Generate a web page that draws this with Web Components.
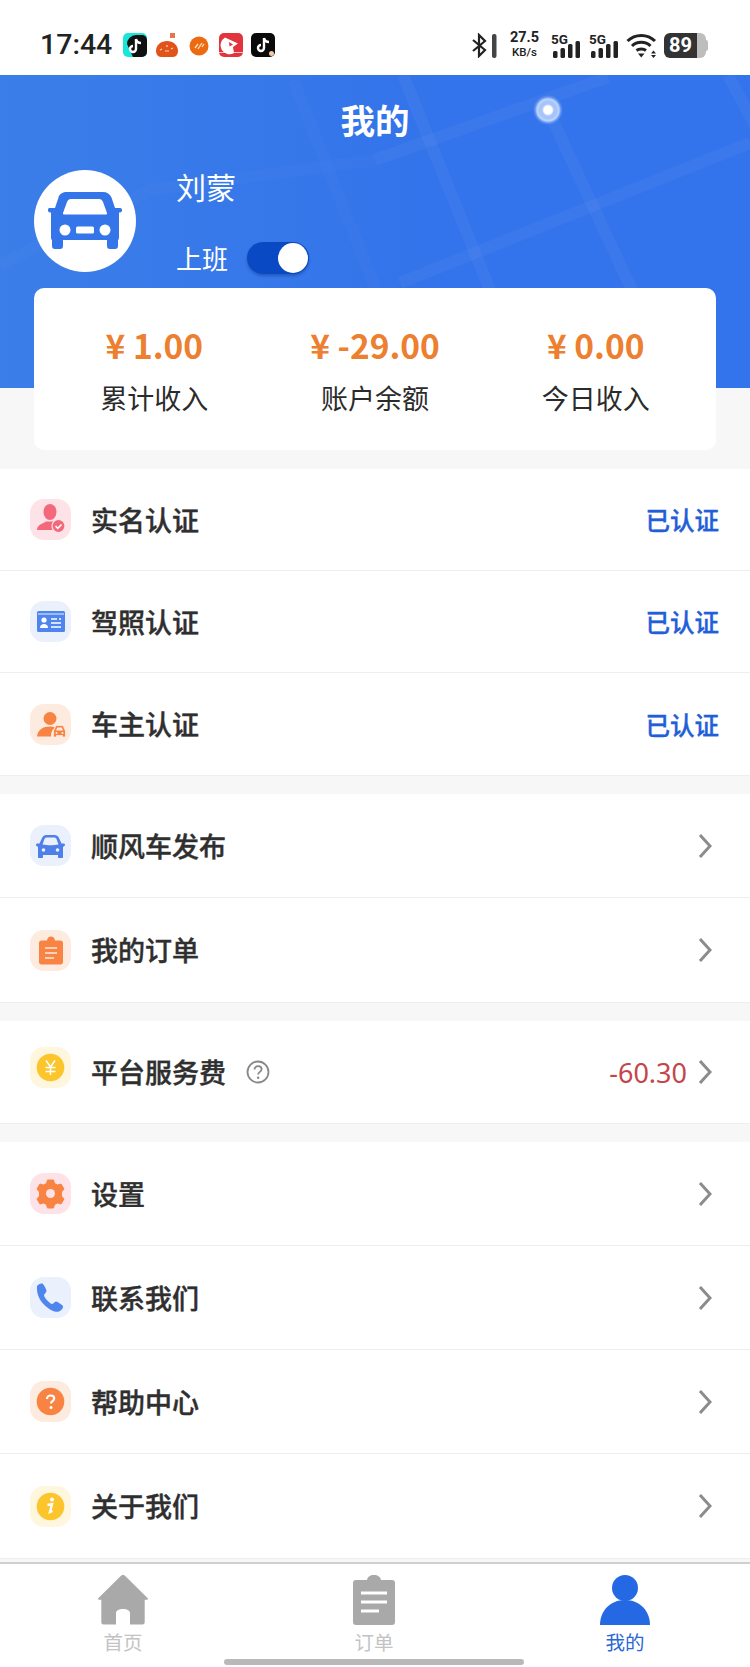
<!DOCTYPE html>
<html lang="zh">
<head>
<meta charset="utf-8">
<title>我的</title>
<style>
  html, body { margin: 0; height: 1667px; overflow: hidden; background: #f7f7f7; }
  body { font-family: "Noto Sans CJK SC", "Noto Sans", sans-serif; }
  profile-page { width: 750px; height: 1667px; }
</style>
</head>
<body>

<profile-page>
  <status-bar></status-bar>
  <profile-header name="刘蒙" state="上班"></profile-header>
  <stats-card>
    <stat-item value="¥ 1.00" label="累计收入"></stat-item>
    <stat-item value="¥ -29.00" label="账户余额"></stat-item>
    <stat-item value="¥ 0.00" label="今日收入"></stat-item>
  </stats-card>

  <menu-group size="102">
    <menu-row label="实名认证" icon="realname"><span class="done">已认证</span></menu-row>
    <menu-row label="驾照认证" icon="license"><span class="done">已认证</span></menu-row>
    <menu-row label="车主认证" icon="owner"><span class="done">已认证</span></menu-row>
  </menu-group>

  <menu-group size="104">
    <menu-row label="顺风车发布" icon="car" arrow></menu-row>
    <menu-row label="我的订单" icon="order" arrow></menu-row>
  </menu-group>

  <menu-group size="102">
    <menu-row label="平台服务费" icon="fee" hint arrow lift><span class="fee">-60.30</span></menu-row>
  </menu-group>

  <menu-group size="104" last>
    <menu-row label="设置" icon="settings" arrow></menu-row>
    <menu-row label="联系我们" icon="phone" arrow></menu-row>
    <menu-row label="帮助中心" icon="help" arrow></menu-row>
    <menu-row label="关于我们" icon="about" arrow></menu-row>
  </menu-group>

  <tab-bar>
    <tab-item label="首页" icon="home"></tab-item>
    <tab-item label="订单" icon="orders"></tab-item>
    <tab-item label="我的" icon="me" active></tab-item>
  </tab-bar>
</profile-page>

<script>
  function mount(el, html) {
    const template = document.createElement("template");
    template.innerHTML = html;
    el.attachShadow({ mode: "open" }).appendChild(template.content.cloneNode(true));
  }

  // icons drawn on a 41x41 tile
  const TILES = {
    realname: ["#fde3e7", `<ellipse cx="20" cy="13" rx="6.500" ry="8" fill="#f4687c"/><path d="M7 31c0-5 5-6 9-8.500h8c2 1 3 2 4 3l-2 5.500z" fill="#f4687c"/><circle cx="28.500" cy="27" r="6.500" fill="#f4687c" stroke="#fde3e7" stroke-width="1.200"/><path d="M25.500 27l2.300 2.300 3.700-3.800" fill="none" stroke="#fff" stroke-width="1.600"/>`],
    license: ["#ebf0fd", `<rect x="7" y="10" width="28" height="21" rx="1.500" fill="#4f86ee"/><path d="M8 13h26" stroke="#ebf0fd" stroke-width="1"/><circle cx="14" cy="19" r="2.600" fill="#fff"/><path d="M10 27c0-3 2-4 4-4s4 1 4 4z" fill="#fff"/><path d="M21 18h6m-6 4h10m-10 4h10M29 18h2" stroke="#fff" stroke-width="1.500"/>`],
    owner: ["#fdebdf", `<circle cx="20" cy="14.500" r="6.500" fill="#f98342"/><path d="M7 32.500c1-7 6-10 13-10 2 0 3 0 5 1-3 2-4 5-4 9z" fill="#f98342"/><path d="M23.500 33v-6l2-4.500c.3-.7.8-1 1.500-1h5c.7 0 1.200.3 1.500 1l2 4.500v6h-3v-1.500h-6V33z" fill="#f98342" stroke="#fdebdf" stroke-width=".8"/><path d="M26 26.500l1.300-3h4.400l1.300 3z" fill="#fdebdf"/><circle cx="26.500" cy="29" r="1" fill="#fdebdf"/><circle cx="32.500" cy="29" r="1" fill="#fdebdf"/>`],
    car: ["#ebf0fd", `<path d="M7 18.500h2.500l2.500-5.500c.8-2 2.500-3 4.500-3h8c2 0 3.700 1 4.500 3l2.500 5.500H34c.8 0 1 1 1 2l-2 1.500V32c0 .6-.4 1-1 1h-3c-.6 0-1-.4-1-1v-2H13v2c0 .6-.4 1-1 1H9c-.6 0-1-.4-1-1V22l-2-1.500c0-1 .2-2 1-2z" fill="#4f80ea"/><path d="M12.500 19.500l2-5.500c.3-.7 1-1.500 2-1.500h8c1 0 1.700.8 2 1.500l2 5.500c-6 1-10 1-16 0z" fill="#ebf0fd"/><circle cx="13.500" cy="25" r="1.800" fill="#ebf0fd"/><circle cx="27.500" cy="25" r="1.800" fill="#ebf0fd"/>`],
    order: ["#fdebdf", `<path d="M11 10.500h5.500c.3-2.500 2-4 4-4s3.700 1.500 4 4H30c1.500 0 2.500 1 2.500 2.500v19c0 1.500-1 2.500-2.500 2.500H11c-1.500 0-2.500-1-2.500-2.500V13c0-1.500 1-2.500 2.500-2.500z" transform="translate(.5 0)" fill="#f98342"/><path d="M15 18h12M15 23h12M15 28h9" stroke="#fdebdf" stroke-width="1.500"/>`],
    fee: ["#fff6de", `<circle cx="20.500" cy="20.500" r="13.800" fill="#fdc52c"/><path d="M16 13.500l4.500 6.500 4.500-6.500M15.500 20.500h10M15.500 24.500h10M20.500 20v8" fill="none" stroke="#fff" stroke-width="1.500"/>`],
    settings: ["#fde3e7", `<path d="M17.500 7h6l1 3.500 3 1.500 3.500-1 3 5-2.500 3v4l2.500 3-3 5-3.500-1-3 1.500-1 3.500h-6l-1-3.500-3-1.500-3.500 1-3-5 2.500-3v-4l-2.500-3 3-5 3.500 1 3-1.500z" fill="#f98342" stroke="#f98342" stroke-linejoin="round"/><circle cx="20.500" cy="20.500" r="4.500" fill="#fde3e7"/>`],
    phone: ["#ebf0fd", `<path d="M7 9.500c0-1.500 4-3.500 5.500-3 1 .4 4 6 4 7.500 0 1.500-2.500 3-2.500 4 0 2.500 5 8 8 9 1 .3 2.500-2.500 4-2.500s6.500 3.500 7 4.500c.6 1.500-1.500 4.500-4 5.500-4 1.500-11-2.500-16-8C8 21 6.500 14 7 9.500z" fill="#4f86ee"/>`],
    help: ["#fdebdf", `<circle cx="20.500" cy="20.500" r="13.800" fill="#f98342"/><path d="M17 18c0-2 1.600-3.500 3.700-3.500 2 0 3.500 1.300 3.500 3 0 2.500-3.200 2.800-3.200 5" fill="none" stroke="#fff" stroke-width="2.200"/><circle cx="21" cy="26.500" r="1.500" fill="#fff"/>`],
    about: ["#fff6de", `<circle cx="20.500" cy="20.500" r="13.800" fill="#fdc52c"/><circle cx="22" cy="13.500" r="2" fill="#fff"/><path d="M17.500 19l4.500-1-2 8 2.500-1" fill="none" stroke="#fff" stroke-width="2.400"/>`],
  };

  const TABS = {
    home: `<path d="M25 0c1 0 1.700.5 2.500 1.200L49.500 23c.9 1 .4 1.800-.8 1.800h-2V47c0 1.500-.7 2.500-2.200 2.500H32V38c0-2.200-2.500-4-7-4s-7 1.800-7 4v11.500H5.500C4 49.500 3.300 48.500 3.300 47V24.800h-2C.1 24.800-.4 24 .5 23L22.500 1.200C23.300.5 24 0 25 0z" fill="#a9a9a9"/>`,
    orders: `<path d="M7 5h11c.5-3 3-5 7-5s6.500 2 7 5h11c2 0 3 1 3 3v39c0 2-1 3-3 3H7c-2 0-3-1-3-3V8c0-2 1-3 3-3z" fill="#a9a9a9"/><path d="M12 18h26M12 27h26M12 36h18" stroke="#fff" stroke-width="3"/>`,
    me: `<circle cx="25" cy="13" r="13" fill="#2468e4"/><path d="M0 50c0-14 10-25 25-25s25 11 25 25z" fill="#2468e4"/>`,
  };

  class StatusBar extends HTMLElement {
    constructor() {
      super();
      mount(this, `
        <style>
          :host { display: flex; height: 75px; background: #fff; align-items: center; color: #222; padding: 15px 44px 0 40px; box-sizing: border-box; font-family: Roboto, "Noto Sans", sans-serif; }
          .time { font-size: 28.500px; font-weight: 500; width: 83px; line-height: 30px; margin-top: -1px; }
          .apps { display: flex; align-items: center; gap: 8px; }
          .apps svg { display: block; width: 24px; height: 24px; }
          .right { margin-left: auto; display: flex; align-items: center; }
          .speed { margin: 0 11px 0 12px; font-size: 14.500px; font-weight: 700; line-height: 15px; text-align: center; width: 31px; }
          .speed small { display: block; font-size: 11.500px; font-weight: 500; }
          svg { display: block; }
          .sig { position: relative; width: 30px; height: 25px; margin-right: 8px; }
          .sig b { position: absolute; left: 0; top: 0; font-size: 13.500px; line-height: 13px; font-weight: 700; }
          .wifi { margin-left: -1px; }
          .battery { position: relative; width: 42px; height: 25px; border-radius: 6px; background: linear-gradient(90deg, #333 0 33px, #bdbdbd 33px); color: #fff; font-weight: 700; font-size: 20px; line-height: 25px; padding-left: 5px; box-sizing: border-box; margin-left: 7px; }
          .battery::after { content: ""; position: absolute; right: -2px; top: 7px; width: 2px; height: 11px; background: #bdbdbd; border-radius: 0 2px 2px 0; }
        </style>
        <span class="time">17:44</span>
        <div class="apps">
          <svg viewBox="0 0 24 24"><rect width="24" height="24" rx="5" fill="#19e6d9"/><path d="M4 11a9 9 0 0 1 9-9h6a5 5 0 0 1 5 5v12a5 5 0 0 1-5 5h-9z" fill="#111"/><path d="M13 6v10a3 3 0 1 1-3-3M13 6c.5 2.500 2 4 5 4" fill="none" stroke="#fff" stroke-width="2.400"/></svg>
          <svg viewBox="0 0 24 24"><path d="M1 18c0-6 5-10 11-10s11 4 11 10c0 3-2 6-5 6H6c-3 0-5-3-5-6z" fill="#e2521b"/><rect x="15" y="0" width="5" height="5" fill="#e2521b" opacity=".8"/><path d="M5 17l2-1M12 12v2M18 15l-2 1M10 18h4" stroke="#ffd9a8" stroke-width="1.200"/></svg>
          <svg viewBox="0 0 24 24"><circle cx="12" cy="13" r="9.500" fill="#ee6a12"/><path d="M8 15l3-4M11 16l4-6M15 14l2-3" stroke="#ffe3bd" stroke-width="1.300"/></svg>
          <svg viewBox="0 0 24 24"><rect width="24" height="24" rx="5" fill="#e1343c"/><path d="M6 4.500l13 6-5 3.500 1 6A8 8 0 0 1 6 4.500z" fill="#fff"/><path d="M10 9l4 2.500-3.500 2z" fill="#e1343c"/><rect y="19" width="24" height="1" fill="#fff" opacity=".7"/></svg>
          <svg viewBox="0 0 24 24"><rect width="24" height="24" rx="5" fill="#0a0a0a"/><path d="M13 5v10a3 3 0 1 1-3-3M13 5c.5 2.500 2 4 5 4" fill="none" stroke="#fff" stroke-width="2.400"/><circle cx="20.500" cy="20.500" r="2.500" fill="#f6c9a5"/></svg>
        </div>
        <div class="right">
          <svg width="25" height="25" viewBox="0 0 25 25"><path d="M1 7l12 10-6 6V2l6 6L1 18" fill="none" stroke="#222" stroke-width="2.200"/><rect x="20" y="1" width="4.500" height="24" rx="2" fill="#444"/></svg>
          <div class="speed">27.5<small>KB/s</small></div>
          <div class="sig"><b>5G</b><svg width="30" height="25" viewBox="0 0 30 25"><rect x="2" y="18" width="4.500" height="7" rx="1.500" fill="#222"/><rect x="9.500" y="15" width="4.500" height="10" rx="1.500" fill="#222"/><rect x="17" y="11" width="4.500" height="14" rx="1.500" fill="#222"/><rect x="24.500" y="8" width="4.500" height="17" rx="1.500" fill="#222"/></svg></div>
          <div class="sig"><b>5G</b><svg width="30" height="25" viewBox="0 0 30 25"><rect x="2" y="18" width="4.500" height="7" rx="1.500" fill="#222"/><rect x="9.500" y="15" width="4.500" height="10" rx="1.500" fill="#222"/><rect x="17" y="11" width="4.500" height="14" rx="1.500" fill="#222"/><rect x="24.500" y="8" width="4.500" height="17" rx="1.500" fill="#222"/></svg></div>
          <svg class="wifi" width="31" height="25" viewBox="0 0 31 25"><path d="M1.500 8c7.500-7.500 20-7.500 27.500 0M6 13c5-5 13.500-5 18.500 0M10.500 17.500c2.500-2 7-2 9.500 0" fill="none" stroke="#222" stroke-width="3"/><path d="M12 20.500h6.500l-3.250 4zM27.500 17.500l2.500 3h-5zM27.500 25l2.500-3h-5z" fill="#222"/></svg>
          <div class="battery">89</div>
        </div>
      `);
    }
  }

  class ProfileHeader extends HTMLElement {
    constructor() {
      super();
      mount(this, `
        <style>
          :host { display: block; position: relative; height: 313px; background: linear-gradient(90deg, #3b7ee8, #3373eb 60%); color: #fff; overflow: hidden; }
          .map { position: absolute; left: 0; top: 0; }
          .content { position: relative; }
          h1 { margin: 0 0 3px; height: 92px; line-height: 88px; text-align: center; font-size: 34.500px; font-weight: 700; }
          .profile { display: flex; padding-left: 34px; gap: 40px; }
          .avatar { width: 102px; height: 102px; flex: none; }
          .name { font-size: 30px; line-height: 36px; font-weight: 400; margin-top: -2px; }
          .work { margin-top: 38px; display: flex; align-items: center; gap: 19px; font-size: 26px; line-height: 32px; }
          .toggle { position: relative; width: 62px; height: 32px; border-radius: 16px; background: #0a49c4; box-shadow: 0 2px 3px rgba(0,20,90,.3); }
          .toggle::after { content: ""; position: absolute; right: 1px; top: 1px; width: 30px; height: 30px; border-radius: 50%; background: #fff; }
          .pulse { position: absolute; left: 533px; top: 20px; width: 30px; height: 30px; border-radius: 50%; background: radial-gradient(circle, #fff 0 4px, #a5c5fa 6px 9px, #b9d1fb 10px 11px, rgba(140,180,250,.45) 13px, transparent 15px); }
        </style>
        <svg class="map" width="750" height="313" viewBox="0 0 750 313" fill="none" stroke="#fff" stroke-width="12">
          <g stroke-opacity=".015">
            <path d="M0 190L150 115 375 85"/>
            <path d="M293 5L380 225"/>
          </g>
          <g stroke-opacity=".04">
            <path d="M375 85L608 2"/>
            <path d="M403 0L490 215"/>
            <path d="M548 35L632 215"/>
            <path d="M400 208L750 68"/>
            <path d="M728 0L760 60"/>
          </g>
        </svg>
        <div class="pulse"></div>
        <div class="content">
          <h1>我的</h1>
          <div class="profile">
            <svg class="avatar" viewBox="0 0 102 102">
              <circle cx="51" cy="51" r="51" fill="#fff"/>
              <path d="M33 22H69c4 0 7 2 8.500 5.500L81 38h5c1.500 0 2 .8 2 2s-.5 2.500-2 2.500h-1V67c0 2-.5 3-1 3v6c0 2-1 3-3 3h-5c-2 0-3-1-3-3v-6H29v6c0 2-1 3-3 3h-5c-2 0-3-1-3-3v-6c-.5 0-1-1-1-3V42.500h-1c-1.500 0-2-1-2-2.500s.5-2 2-2h5l3.500-10.500C25 24 29 22 33 22z" fill="#3475ea"/>
              <path d="M29 43l4-11c.8-2 2-3 4-3h28c2 0 3.200 1 4 3l4 11c.3 1-.5 1.500-1.500 1.500h-41C29.500 44.500 28.700 44 29 43z" fill="#fff"/>
              <circle cx="31" cy="60" r="5.500" fill="#fff"/><circle cx="71" cy="60" r="5.500" fill="#fff"/>
              <rect x="42" y="56.500" width="18" height="7" rx="1.500" fill="#fff"/>
            </svg>
            <div>
              <div class="name">${this.getAttribute("name")}</div>
              <div class="work">${this.getAttribute("state")}<span class="toggle"></span></div>
            </div>
          </div>
        </div>
      `);
    }
  }

  class StatsCard extends HTMLElement {
    constructor() {
      super();
      mount(this, `
        <style>
          :host { display: block; margin: -100px 34px 19px; position: relative; height: 162px; background: #fff; border-radius: 10px; }
          .grid { display: grid; grid-template-columns: repeat(3, 1fr); padding: 0 10px; }
        </style>
        <div class="grid"><slot></slot></div>
      `);
    }
  }

  class StatItem extends HTMLElement {
    constructor() {
      super();
      mount(this, `
        <style>
          :host { display: block; text-align: center; padding-top: 34px; }
          .value { font-size: 33.500px; line-height: 46px; font-weight: 700; color: #ec7f30; white-space: nowrap; }
          .label { font-size: 27px; line-height: 40px; margin-top: 10px; color: #2b2b2b; }
        </style>
        <div class="value">${this.getAttribute("value")}</div>
        <div class="label">${this.getAttribute("label")}</div>
      `);
    }
  }

  class MenuGroup extends HTMLElement {
    constructor() {
      super();
      mount(this, `
        <style>
          :host { display: block; background: #fff; margin-bottom: 19px; --row-height: ${this.getAttribute("size")}px; }
          :host([last]) { margin-bottom: 4px; }
        </style>
        <slot></slot>
      `);
    }
  }

  class MenuRow extends HTMLElement {
    constructor() {
      super();
      const tile = TILES[this.getAttribute("icon")];
      const hint = this.hasAttribute("hint")
        ? `<svg class="hint" width="24" height="24" viewBox="0 0 24 24"><circle cx="12" cy="12" r="10.500" fill="none" stroke="#888" stroke-width="1.800"/><path d="M8.500 9.500c0-2 1.600-3.300 3.600-3.300s3.500 1.300 3.500 3c0 2.600-3.500 2.700-3.500 5.300" fill="none" stroke="#888" stroke-width="1.800"/><circle cx="12.100" cy="17.700" r="1.200" fill="#888"/></svg>`
        : "";
      const arrow = this.hasAttribute("arrow")
        ? `<svg class="arrow" width="14" height="26" viewBox="0 0 14 26"><path d="M2 2l10 11L2 24" fill="none" stroke="#8c8c8c" stroke-width="3"/></svg>`
        : "";
      mount(this, `
        <style>
          :host { display: flex; align-items: center; height: var(--row-height); box-sizing: border-box; border-bottom: 1px solid #eeeeee; padding: 0 31px 0 30px; }
          :host(:last-child) { border-bottom: 0; box-shadow: 0 1px 0 #eeeeee; }
          .tile { display: block; width: 41px; height: 41px; border-radius: 14px; flex: none; margin-right: 20px; }
          :host([lift]) .tile { margin-top: -9px; }
          .label { font-size: 27px; font-weight: 500; -webkit-text-stroke: .4px #2f2f2f; color: #2f2f2f; line-height: 36px; }
          .hint { margin-left: 20px; }
          .right { margin-left: auto; display: flex; align-items: center; gap: 11px; font-family: "Noto Sans", "Noto Sans CJK SC", sans-serif; }
          ::slotted(.done) { font-family: "Noto Sans CJK SC", sans-serif; font-size: 24.500px; font-weight: 500; -webkit-text-stroke: .35px #1f60d8; color: #1f60d8; }
          ::slotted(.fee) { font-size: 27px; color: #c5454c; }
          .arrow { margin-right: 7px; }
        </style>
        <svg class="tile" viewBox="0 0 41 41" style="background:${tile[0]}">${tile[1]}</svg>
        <span class="label">${this.getAttribute("label")}</span>
        ${hint}
        <div class="right"><slot></slot>${arrow}</div>
      `);
    }
  }

  class TabBar extends HTMLElement {
    constructor() {
      super();
      mount(this, `
        <style>
          :host { display: block; position: relative; height: 105px; box-sizing: border-box; background: #fff; border-top: 2px solid #cfcfcf; }
          .tabs { display: grid; grid-template-columns: 246px 256px 246px; }
          .line { position: absolute; left: 224px; bottom: 2px; width: 300px; height: 6px; border-radius: 3px; background: #b9b9b9; }
        </style>
        <div class="tabs"><slot></slot></div>
        <div class="line"></div>
      `);
    }
  }

  class TabItem extends HTMLElement {
    constructor() {
      super();
      mount(this, `
        <style>
          :host { display: flex; flex-direction: column; align-items: center; padding-top: 11px; color: #c3c3c3; font-size: 19.500px; }
          :host([active]) { color: #2a68d6; }
          svg { display: block; }
          span { line-height: 28px; margin-top: 3px; }
        </style>
        <svg width="50" height="50" viewBox="0 0 50 50">${TABS[this.getAttribute("icon")]}</svg>
        <span>${this.getAttribute("label")}</span>
      `);
    }
  }

  class ProfilePage extends HTMLElement {
    constructor() {
      super();
      mount(this, `
        <style>:host { display: block; background: #f7f7f7; }</style>
        <slot></slot>
      `);
    }
  }

  customElements.define("status-bar", StatusBar);
  customElements.define("profile-header", ProfileHeader);
  customElements.define("stats-card", StatsCard);
  customElements.define("stat-item", StatItem);
  customElements.define("menu-group", MenuGroup);
  customElements.define("menu-row", MenuRow);
  customElements.define("tab-bar", TabBar);
  customElements.define("tab-item", TabItem);
  customElements.define("profile-page", ProfilePage);
</script>
</body>
</html>
